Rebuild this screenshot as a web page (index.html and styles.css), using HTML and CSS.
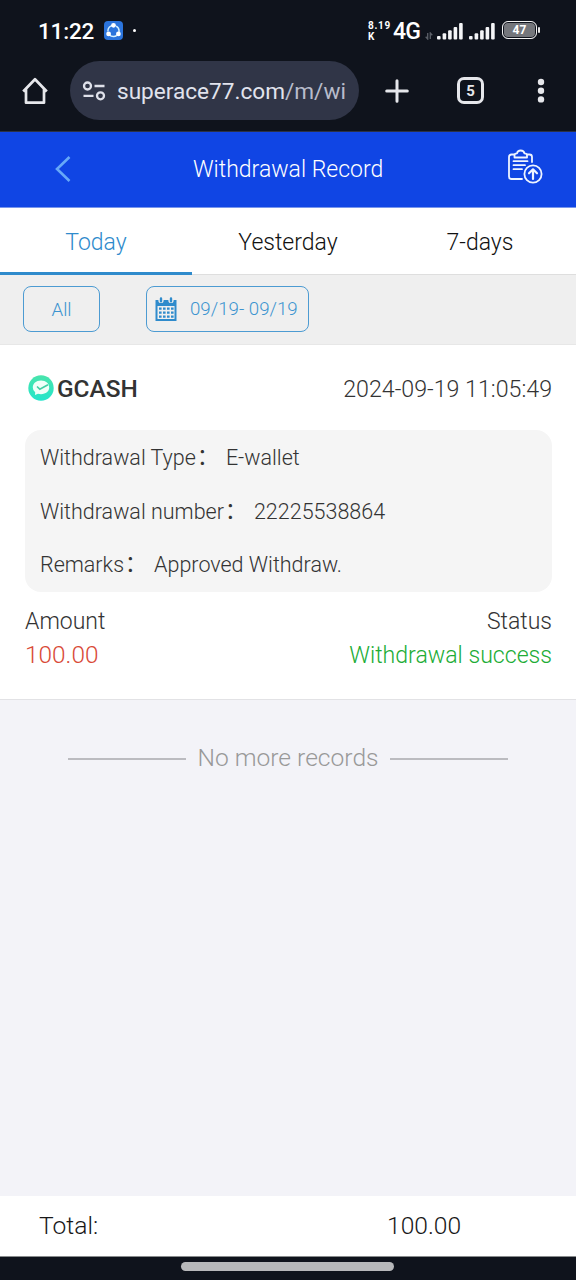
FILE: index.html
```html
<!DOCTYPE html>
<html lang="en">
<head>
<meta charset="utf-8">
<title>Withdrawal Record</title>
<link rel="stylesheet" href="styles.css">
</head>
<body>
<div class="phone">
  <div class="statusbar">
    <span class="clock">11:22</span>
    <svg class="share-app" width="19" height="19" viewBox="0 0 19 19"><rect width="19" height="19" rx="4" fill="#2b74dc"/><circle cx="9.5" cy="10" r="5.6" fill="none" stroke="#d4f0ff" stroke-width="1.5" stroke-dasharray="8.2 3.53" stroke-dashoffset="-5"/><g fill="#fff"><circle cx="9.5" cy="4.3" r="2.4"/><circle cx="4.6" cy="12.9" r="2.4"/><circle cx="14.4" cy="12.9" r="2.4"/></g></svg>
    <i class="more-dot"></i>
    <div class="netspeed"><span>8.19</span><span>K</span></div>
    <span class="network">4G</span>
    <svg class="updown" width="8" height="8" viewBox="0 0 8 8" fill="none" stroke="#5c6068" stroke-width="1.3"><path d="M2.7 1v6L.7 4.8M5.3 7V1l2 2.2"/></svg>
    <svg class="signal" width="26" height="17" viewBox="0 0 26 17" fill="#f4f5f7"><rect y="13" width="3.6" height="3.4" rx="1"/><rect x="5.6" y="10.3" width="3.6" height="6.1" rx="1"/><rect x="11.1" y="7.2" width="3.6" height="9.2" rx="1"/><rect x="16.6" y="4" width="3.6" height="12.4" rx="1"/><rect x="22.1" y="0" width="3.6" height="16.4" rx="1"/></svg>
    <svg class="signal signal-second" width="26" height="17" viewBox="0 0 26 17" fill="#f4f5f7"><rect y="13" width="3.6" height="3.4" rx="1"/><rect x="5.6" y="10.3" width="3.6" height="6.1" rx="1"/><rect x="11.1" y="7.2" width="3.6" height="9.2" rx="1"/><rect x="16.6" y="4" width="3.6" height="12.4" rx="1"/><rect x="22.1" y="0" width="3.6" height="16.4" rx="1"/></svg>
    <div class="battery">47</div><i class="battery-tip"></i>
  </div>
  <div class="browserbar">
    <svg class="home" width="28" height="28" viewBox="0 0 28 28" fill="none" stroke="#e6e7eb" stroke-width="2.7" stroke-linejoin="round"><path d="M2.2 14.500 14 2.300 25.800 14.500M5 12V25.700H23V12"/></svg>
    <div class="address">
      <svg width="24" height="20" viewBox="0 0 24 20" fill="none" stroke="#dfe1ea" stroke-width="2.3"><circle cx="5.5" cy="5" r="3.5"/><path d="M12.5 5H22.5M1.5 14.8H11.5"/><circle cx="18.5" cy="14.8" r="3.5"/></svg>
      <span class="url">superace77.com<span class="path">/m/wi</span></span>
    </div>
    <svg class="plus" width="24" height="24" viewBox="0 0 24 24" stroke="#e6e7eb" stroke-width="3" stroke-linecap="round"><path d="M12 1.7V22.3M1.7 12H22.3"/></svg>
    <div class="tabcount">5</div>
    <svg class="kebab" width="8" height="25" viewBox="0 0 8 25" fill="#e6e7eb"><circle cx="4" cy="4" r="3.2"/><circle cx="4" cy="12.7" r="3.2"/><circle cx="4" cy="21.4" r="3.2"/></svg>
  </div>
  <header class="header">
    <svg class="back" width="16" height="28" viewBox="0 0 16 28" fill="none" stroke="#67a9f8" stroke-width="2.6"><path d="M14.500 2 2 14 14.500 26"/></svg>
    <h1 class="title">Withdrawal Record</h1>
    <svg class="records" width="36" height="36" viewBox="0 0 36 36" fill="none" stroke="#eef4ff" stroke-width="1.8" stroke-linecap="round" stroke-linejoin="round"><path d="M7 5.500H4.500Q2 5.500 2 8V27.500Q2 30 4.500 30H15M20.500 5.500H22.500Q25 5.500 25 8V13"/><path d="M7.500 8.500V6.200Q7.500 4.500 10 4.400Q10.500 1.500 13.700 1.500Q16.900 1.500 17.400 4.400Q20 4.500 20 6.200V8.500Z"/><path d="M6.500 12.200H20.500M6.500 16.200H18M6.500 20.200H15"/><circle cx="26" cy="25" r="8.600"/><path d="M26 30V20.500M22 24.300 26 20.300 30 24.300" stroke-width="2.200"/></svg>
  </header>
  <nav class="tabs">
    <div class="tab active">Today</div>
    <div class="tab">Yesterday</div>
    <div class="tab">7-days</div>
  </nav>
  <div class="filters">
    <div class="filter all">All</div>
    <div class="filter dates">
      <svg width="22" height="24" viewBox="0 0 22 24" fill="#2f8bcc"><path d="M.5 3H21.500V24H.5Z"/><g fill="#efefef"><circle cx="6" cy="3.500" r="2.600"/><circle cx="16" cy="3.500" r="2.600"/><path d="M2.500 9H19.500V22H2.500Z"/></g><path d="M4 10.500h2.600v2.300H4zM8 10.500h2.600v2.300H8zM12 10.500h2.600v2.300H12zM16 10.500h2.600v2.300H16zM4 14.500h2.600v2.300H4zM8 14.500h2.600v2.300H8zM12 14.500h2.600v2.300H12zM16 14.500h2.600v2.300H16zM4 18.500h2.600v2.300H4zM8 18.500h2.600v2.300H8zM12 18.500h2.600v2.300H12zM16 18.500h2.600v2.300H16z"/><path d="M6 1.500V4.300M16 1.500V4.300" stroke="#2f8bcc" stroke-width="2.400" stroke-linecap="round"/></svg>
      <span class="range">09/19- 09/19</span>
    </div>
  </div>
  <section class="record">
    <div class="record-head">
      <svg width="26" height="26" viewBox="0 0 26 26"><defs><linearGradient id="mint" x2="0" y2="1"><stop stop-color="#49e4ab"/><stop offset="1" stop-color="#24e5cb"/></linearGradient></defs><circle cx="13" cy="13" r="12.700" fill="url(#mint)"/><path d="M13 5.500C8 5.500 4.800 8.700 4.800 12.500Q4.800 15.500 7.200 17.300L7 20 10 18.800C16.500 20.200 21.200 17 21.200 12.500C21.200 8.500 18 5.500 13 5.500Z" fill="#f0fff8"/><path d="M9 11.500 11.800 14.200 20 9.700" fill="none" stroke="#43cfa4" stroke-width="1.600"/></svg>
      <b class="gcash">GCASH</b>
      <span class="timestamp">2024-09-19 11:05:49</span>
    </div>
    <div class="details">
      <div class="detail"><span>Withdrawal Type</span><span class="colon">：</span><span>E-wallet</span></div>
      <div class="detail"><span>Withdrawal number</span><span class="colon">：</span><span>22225538864</span></div>
      <div class="detail"><span>Remarks</span><span class="colon">：</span><span>Approved Withdraw.</span></div>
    </div>
    <div class="summary labels"><span>Amount</span><span>Status</span></div>
    <div class="summary values"><span class="amount">100.00</span><span class="success">Withdrawal success</span></div>
  </section>
  <main class="rest">
    <div class="end"><i></i><span>No more records</span><i></i></div>
  </main>
  <footer class="total"><span class="total-label">Total:</span><span>100.00</span></footer>
  <div class="gesture"><i></i></div>
</div>
</body>
</html>
```
FILE: styles.css
```css
* { box-sizing: border-box; }
body { margin: 0; font-family: Roboto, "Noto Sans CJK SC", sans-serif; font-weight: 300; }
svg { display: block; flex: none; }
.phone { width: 576px; height: 1280px; display: flex; flex-direction: column; overflow: hidden; background: #f3f3f8; white-space: nowrap; }
.phone > * { flex: none; }

.statusbar { height: 60px; display: flex; align-items: center; padding: 3px 0 0 38px; background: #0f131c; color: #fff; }
.clock { width: 66px; margin-top: -2px; font-size: 22.5px; font-weight: 500; letter-spacing: -.2px; }
.share-app { margin-top: -2px; }
.more-dot { width: 3px; height: 3px; margin: -2px 1px 0 10px; border-radius: 50%; background: #fff; }
.netspeed { width: 25px; margin-left: 231px; display: flex; flex-direction: column; font-size: 10px; line-height: 10.5px; font-weight: 700; letter-spacing: .7px; }
.network { width: 32px; font-size: 23px; font-weight: 500; letter-spacing: -.7px; }
.updown { margin-top: 8px; }
.signal { margin: -1px 0 0 4px; }
.signal-second { margin-left: 6px; }
.battery { width: 35px; height: 18px; margin: -3px 0 0 7px; border: 1.5px solid #f2f2f2; border-radius: 6px; box-shadow: inset 0 0 0 1px #0f131c; background: #74767b; font-size: 12px; line-height: 17px; font-weight: 700; text-align: center; }
.battery-tip { width: 2px; height: 6px; margin: -3px 0 0 1px; background: #e6e6e6; border-radius: 1px; }

.browserbar { height: 72px; display: flex; align-items: center; padding: 0 0 10px 21px; background: #0f131c; border-bottom: 1px solid #2b3146; }
.address { width: 289px; height: 59px; display: flex; align-items: center; gap: 11px; margin-left: 21px; padding-left: 12px; border-radius: 30px; background: #303547; }
.url { padding-top: 2px; font-size: 22.6px; font-weight: 400; color: #e1e3ed; }
.path { color: #b8bccb; }
.plus { margin-left: 26px; }
.tabcount { width: 27px; height: 27px; margin-left: 48px; border: 3px solid #e6e7eb; border-radius: 7px; color: #e6e7eb; font-size: 15px; line-height: 22px; font-weight: 700; text-align: center; }
.kebab { margin-left: 53px; }

.header { height: 76px; display: flex; align-items: center; padding: 0 33px 0 55px; background: #1045e4; border-bottom: 1px solid #7896ec; }
.back { margin-top: -2px; }
.title { flex: 1; margin: 0 0 0 122px; font-size: 23px; font-weight: 300; color: #fff; }
.records { margin-top: -6px; }

.tabs { height: 67px; display: flex; border-bottom: 1px solid #dedede; background: #fff; }
.tab { flex: 1; display: flex; justify-content: center; align-items: center; padding-top: 2px; font-size: 23px; color: #111; }
.active { height: 68px; color: #2f8bcc; border-bottom: 4px solid #2f8bcc; padding-top: 4px; }
.filters { height: 70px; display: flex; gap: 46px; padding: 11px 23px; background: #efefef; border-bottom: 1px solid #e7e7e7; }
.filter { height: 46px; display: flex; align-items: center; border: 1.4px solid #4c9bd2; border-radius: 8px; font-size: 18.7px; color: #3c94d0; }
.all { width: 77px; padding-top: 1px; justify-content: center; }
.dates { width: 163px; padding-left: 8px; gap: 13px; }

.record { height: 355px; padding: 28px 24px 0 25px; background: #fff; border-bottom: 1px solid #e2e2e5; color: #333; }
.record-head { height: 32px; display: flex; align-items: center; padding-left: 3px; }
.record-head svg { margin-top: -2px; }
.gcash { margin: -2px 0 0 3px; font-size: 24.4px; font-weight: 500; }
.timestamp { margin-left: auto; font-size: 23.2px; }
.details { height: 162px; margin-top: 25px; padding: 1px 0 0 15px; border-radius: 16px; background: #f5f5f5; font-size: 21.5px; }
.detail { height: 53.4px; display: flex; align-items: center; }
.colon { width: 30px; padding-bottom: 6px; text-indent: 1px; font-weight: 400; }
.summary { display: flex; justify-content: space-between; font-size: 23px; }
.labels { margin-top: 16px; line-height: 27px; }
.values { margin-top: 7px; line-height: 27px; }
.amount { color: #d94a37; font-size: 24.4px; line-height: 26px; }
.success { color: #20ac35; font-size: 23.1px; }

.phone > .rest { flex: 1; padding-top: 42px; }
.end { height: 30px; display: flex; align-items: center; justify-content: center; gap: 11px; color: #999; font-size: 24.6px; }
.end i { width: 118px; height: 2px; margin-top: 3px; background: #bbbbc0; }
.total { height: 61px; display: flex; align-items: center; padding: 0 0 1px 39px; border-bottom: 1px solid #888b8c; background: #fff; font-size: 24.6px; color: #181818; }
.total-label { width: 348px; }
.gesture { height: 23px; display: flex; justify-content: center; padding: 5px 1px 0 0; background: #0f131c; }
.gesture i { width: 213px; height: 9px; border-radius: 5px; background: #b7b8ba; }
```
